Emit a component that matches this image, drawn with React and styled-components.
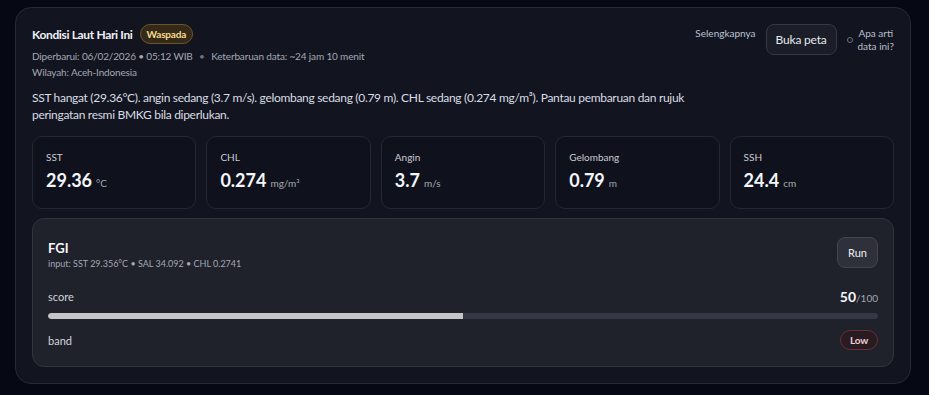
import React from "react"
import styled, { createGlobalStyle } from "styled-components"

const GlobalStyle = createGlobalStyle`
  html, body {
    margin: 0;
    background: #060913;
    font-family: Lato, "Noto Sans", sans-serif;
    color: #e6e8ee;
  }
  * { box-sizing: border-box; }
`

const metrics = [
  { label: "SST", value: "29.36", unit: "°C" },
  { label: "CHL", value: "0.274", unit: "mg/m³" },
  { label: "Angin", value: "3.7", unit: "m/s" },
  { label: "Gelombang", value: "0.79", unit: "m" },
  { label: "SSH", value: "24.4", unit: "cm" },
]

export default function App() {
  return (
    <Page>
      <GlobalStyle />
      <Card>
        <Header>
          <div>
            <TitleRow>
              <Title>Kondisi Laut Hari Ini</Title>
              <Badge tone="warn">Waspada</Badge>
            </TitleRow>
            <Meta>
              Diperbarui: 06/02/2026 • 05:12 WIB <Dot>•</Dot> Keterbaruan data: ~24 jam 10 menit
            </Meta>
            <Meta>Wilayah: Aceh-Indonesia</Meta>
          </div>
          <Actions>
            <MoreLink>Selengkapnya</MoreLink>
            <Button>Buka peta</Button>
            <Help>
              <HelpIcon />
              <span>Apa arti<br />data ini?</span>
            </Help>
          </Actions>
        </Header>

        <Summary>
          SST hangat (29.36°C). angin sedang (3.7 m/s). gelombang sedang (0.79 m). CHL sedang (0.274 mg/m³). Pantau pembaruan dan rujuk peringatan resmi BMKG bila diperlukan.
        </Summary>

        <Metrics>
          {metrics.map(m => (
            <Metric key={m.label}>
              <MetricLabel>{m.label}</MetricLabel>
              <MetricValue>
                {m.value}
                <Unit>{m.unit}</Unit>
              </MetricValue>
            </Metric>
          ))}
        </Metrics>

        <Panel>
          <PanelHead>
            <div>
              <PanelTitle>FGI</PanelTitle>
              <PanelSub>input: SST 29.356°C • SAL 34.092 • CHL 0.2741</PanelSub>
            </div>
            <RunButton>Run</RunButton>
          </PanelHead>
          <Row>
            <RowLabel>score</RowLabel>
            <Score>50<small>/100</small></Score>
          </Row>
          <Track>
            <Fill style={{ width: "50%" }} />
          </Track>
          <Row>
            <RowLabel>band</RowLabel>
            <Badge tone="low">Low</Badge>
          </Row>
        </Panel>
      </Card>
    </Page>
  )
}

const Page = styled.div`
  padding: 7px 18px 13px 15px;
  min-height: 395px;
`

const Card = styled.div`
  background: #121520;
  border: 1px solid #262a36;
  border-radius: 16px;
  padding: 16px 16px 16px 16px;
`

const Header = styled.div`
  display: flex;
  justify-content: space-between;
  align-items: flex-start;
`

const TitleRow = styled.div`
  display: flex;
  align-items: center;
  gap: 7px;
  margin-bottom: 4px;
`

const Title = styled.span`
  font-size: 12px;
  font-weight: 700;
  letter-spacing: -0.35px;
  color: #eef0f4;
`

const Badge = styled.span`
  display: inline-flex;
  align-items: center;
  height: 20px;
  border-radius: 10px;
  font-size: 10px;
  font-weight: 700;
  letter-spacing: -0.2px;
  ${p => p.tone === "warn" && `
    padding: 0 6px;
    background: #35291a;
    border: 1px solid #6e5527;
    color: #f6dc8e;
  `}
  ${p => p.tone === "low" && `
    padding: 0 9px;
    background: #281b21;
    border: 1px solid #6a2e36;
    color: #f2d0d4;
  `}
`

const Meta = styled.div`
  font-size: 10px;
  line-height: 16px;
  letter-spacing: -0.15px;
  color: #a4a8b3;
`

const Dot = styled.span`
  margin: 0 4px;
  color: #6e7280;
`

const Actions = styled.div`
  display: flex;
  align-items: center;
  gap: 10px;
`

const MoreLink = styled.span`
  font-size: 10px;
  color: #b9c2d2;
  align-self: flex-start;
  margin-top: 3px;
`

const Button = styled.button`
  font-family: inherit;
  font-size: 12px;
  color: #e6e8ee;
  background: #1b1e29;
  border: 1px solid #353946;
  border-radius: 8px;
  height: 31px;
  padding: 0 9px;
  letter-spacing: -0.2px;
`

const Help = styled.div`
  display: flex;
  align-items: center;
  gap: 5px;
  font-size: 10px;
  line-height: 13px;
  text-align: center;
  color: #b9bfcc;
`

const HelpIcon = styled.span`
  width: 6px;
  height: 6px;
  border-radius: 50%;
  border: 1px solid #6b707c;
`

const Summary = styled.p`
  margin: 9px 0 13px;
  max-width: 700px;
  font-size: 12px;
  line-height: 17px;
  letter-spacing: -0.3px;
  color: #dadde4;
`

const Metrics = styled.div`
  display: grid;
  grid-template-columns: repeat(5, 1fr);
  gap: 10px;
`

const Metric = styled.div`
  height: 73px;
  background: #0f121c;
  border: 1px solid #252834;
  border-radius: 10px;
  padding: 14px 13px;
`

const MetricLabel = styled.div`
  font-size: 10px;
  color: #c9ccd4;
  margin-bottom: 6px;
`

const MetricValue = styled.div`
  font-size: 18px;
  font-weight: 700;
  color: #f4f6fa;
`

const Unit = styled.span`
  margin-left: 4px;
  font-size: 10px;
  font-weight: 400;
  color: #a4a8b3;
`

const Panel = styled.div`
  margin-top: 9px;
  background: #1f212b;
  border: 1px solid #31343f;
  border-radius: 12px;
  padding: 18px 15px 16px;
`

const PanelHead = styled.div`
  display: flex;
  justify-content: space-between;
  align-items: flex-start;
  margin-bottom: 19px;
`

const PanelTitle = styled.div`
  font-size: 13px;
  font-weight: 700;
  color: #f6f7fa;
  margin-top: 3px;
`

const PanelSub = styled.div`
  font-size: 9px;
  color: #a4a8b3;
  margin-top: 2px;
`

const RunButton = styled.button`
  font-family: inherit;
  font-size: 11px;
  color: #eceef2;
  background: #2e313b;
  border: 1px solid #42454f;
  border-radius: 8px;
  width: 41px;
  height: 31px;
`

const Row = styled.div`
  display: flex;
  justify-content: space-between;
  align-items: center;
`

const RowLabel = styled.span`
  font-size: 11px;
  color: #d2d5dc;
`

const Score = styled.span`
  font-size: 14px;
  font-weight: 700;
  color: #f6f7fa;
  small { font-size: 10px; font-weight: 400; color: #a4a8b3; }
`

const Track = styled.div`
  height: 6px;
  margin: 8px 0 11px;
  background: #353844;
  border-radius: 3px;
  overflow: hidden;
`

const Fill = styled.div`
  height: 100%;
  background: #c4c5c7;
  border-radius: 3px 0 0 3px;
`
